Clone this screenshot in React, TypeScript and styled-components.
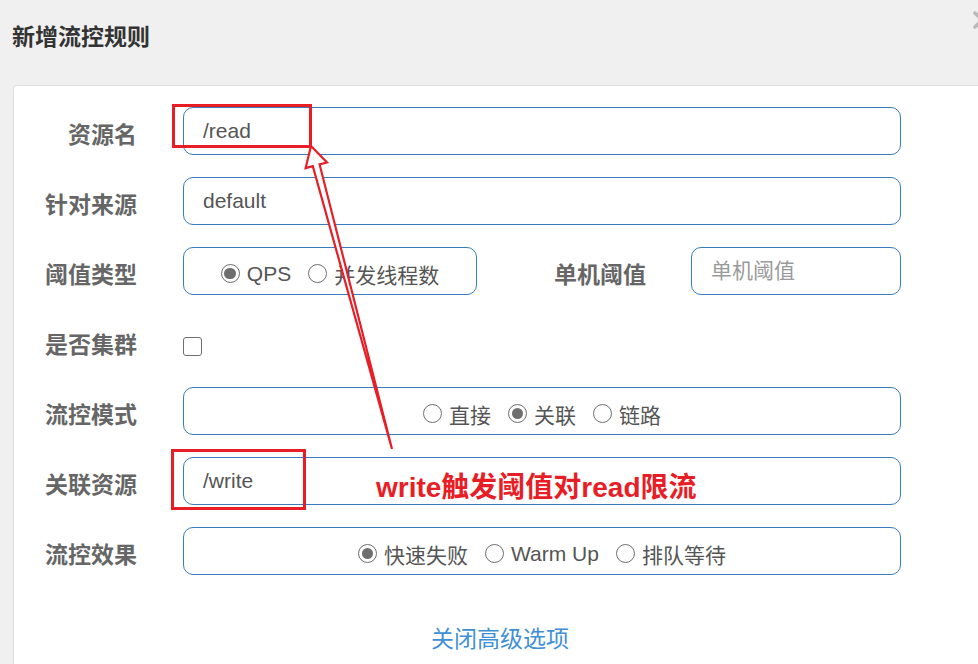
import React from 'react';
import styled, { createGlobalStyle, css } from 'styled-components';

const GlobalStyle = createGlobalStyle`
  html, body { margin: 0; padding: 0; background: #f0f0f0; overflow: hidden; }
  body { font-family: "Liberation Sans", "Noto Sans CJK SC", sans-serif; }
  * { box-sizing: border-box; }
`;

const Page = styled.div`
  position: relative;
  width: 978px;
  height: 664px;
  overflow: hidden;
  background: #f0f0f0;
`;

const Header = styled.div`
  position: relative;
  height: 85px;
  padding: 18px 0 0 12px;
`;

const Title = styled.h4`
  margin: 0;
  font-family: "Noto Sans CJK SC", sans-serif;
  font-size: 23px;
  line-height: 34px;
  font-weight: 700;
  color: #333;
`;

const CloseIcon = styled.svg`
  position: absolute;
  left: 973px;
  top: 11px;
  width: 18px;
  height: 18px;
`;

const Card = styled.div`
  margin-left: 13px;
  width: 974px;
  height: 620px;
  background: #fff;
  border: 1px solid #dcdcdc;
  border-radius: 4px;
  padding-top: 21px;
`;

const Form = styled.div`
  display: flex;
  flex-direction: column;
  gap: 22px;
`;

const Row = styled.div`
  display: flex;
  align-items: center;
  height: 48px;
`;

const Label = styled.label<{ $width?: number; $gap?: number }>`
  flex: none;
  width: ${p => p.$width ?? 123}px;
  margin-right: ${p => p.$gap ?? 46}px;
  padding-top: 4px;
  text-align: right;
  font-family: "Noto Sans CJK SC", sans-serif;
  font-size: 23px;
  font-weight: 700;
  color: #666;
`;

const boxBase = css`
  flex: none;
  height: 48px;
  border: 1px solid #3a7bbf;
  border-radius: 10px;
  background: #fff;
`;

const Input = styled.input<{ $width?: number }>`
  ${boxBase};
  width: ${p => p.$width ?? 718}px;
  padding: 0 19px;
  font-family: "Liberation Sans", "Noto Sans CJK SC", sans-serif;
  font-size: 21px;
  color: #555;
  outline: none;
  &::placeholder { color: #9a9a9a; }
`;

const RadioBox = styled.div<{ $width?: number }>`
  ${boxBase};
  width: ${p => p.$width ?? 718}px;
  display: flex;
  align-items: center;
  justify-content: center;
  gap: 17px;
  padding-top: 5px;
`;

const RadioItem = styled.span`
  display: inline-flex;
  align-items: center;
  gap: 7px;
  font-size: 21px;
  color: #555;
`;

const Dot = styled.span<{ $checked?: boolean }>`
  position: relative;
  flex: none;
  width: 19px;
  height: 19px;
  border-radius: 50%;
  border: 1.6px solid #6e6e6e;
  background: #fff;
  ${p => p.$checked && css`
    &::after {
      content: '';
      position: absolute;
      inset: 2.6px;
      border-radius: 50%;
      background: #6e6e6e;
    }
  `}
`;

const Check = styled.span`
  flex: none;
  width: 19px;
  height: 19px;
  margin-top: 10px;
  border: 1.5px solid #6e6e6e;
  border-radius: 3px;
  background: #fff;
`;

const LinkRow = styled.div`
  margin-top: 45px;
  text-align: center;
`;

const Link = styled.a`
  font-family: "Noto Sans CJK SC", sans-serif;
  font-size: 23px;
  line-height: 34px;
  color: #3f8fd4;
  text-decoration: none;
`;

const Overlay = styled.svg`
  position: absolute;
  left: 0;
  top: 0;
  width: 978px;
  height: 664px;
  pointer-events: none;
`;

const Note = styled.div`
  position: absolute;
  left: 376px;
  top: 474px;
  font-family: "Liberation Sans", "Noto Sans CJK SC", sans-serif;
  font-size: 28px;
  line-height: 1;
  font-weight: 700;
  color: #e81e27;
  white-space: nowrap;
  pointer-events: none;
`;

type Opt = { label: string; checked?: boolean };

const Radios: React.FC<{ options: Opt[]; width?: number }> = ({ options, width }) => (
  <RadioBox $width={width}>
    {options.map(o => (
      <RadioItem key={o.label}>
        <Dot $checked={o.checked} />
        {o.label}
      </RadioItem>
    ))}
  </RadioBox>
);

export default function App() {
  return (
    <Page>
      <GlobalStyle />
      <Header>
        <Title>新增流控规则</Title>
        <CloseIcon viewBox="0 0 18 18">
          <path d="M2 2 L16 16 M16 2 L2 16" stroke="#b8b8b8" strokeWidth="3.5" strokeLinecap="round" />
        </CloseIcon>
      </Header>
      <Card>
        <Form>
          <Row>
            <Label>资源名</Label>
            <Input defaultValue="/read" readOnly />
          </Row>
          <Row>
            <Label>针对来源</Label>
            <Input defaultValue="default" readOnly />
          </Row>
          <Row>
            <Label>阈值类型</Label>
            <Radios width={294} options={[{ label: 'QPS', checked: true }, { label: '并发线程数' }]} />
            <Label $width={169} $gap={45}>单机阈值</Label>
            <Input $width={210} placeholder="单机阈值" />
          </Row>
          <Row>
            <Label>是否集群</Label>
            <Check />
          </Row>
          <Row>
            <Label>流控模式</Label>
            <Radios options={[{ label: '直接' }, { label: '关联', checked: true }, { label: '链路' }]} />
          </Row>
          <Row>
            <Label>关联资源</Label>
            <Input defaultValue="/write" readOnly />
          </Row>
          <Row>
            <Label>流控效果</Label>
            <Radios options={[{ label: '快速失败', checked: true }, { label: 'Warm Up' }, { label: '排队等待' }]} />
          </Row>
        </Form>
        <LinkRow>
          <Link href="#">关闭高级选项</Link>
        </LinkRow>
      </Card>
      <Overlay viewBox="0 0 978 664">
        <rect x="173.5" y="105.5" width="137" height="41" fill="none" stroke="#e81e27" strokeWidth="3" />
        <rect x="172.5" y="450.5" width="132" height="58" fill="none" stroke="#e81e27" strokeWidth="3" />
        <polygon
          points="311,146 327,162.5 319.6,164.4 392,449 312.8,166.2 305.6,168.1"
          fill="#fff"
          stroke="#e81e27"
          strokeWidth="2.2"
          strokeLinejoin="miter"
        />
      </Overlay>
      <Note>write触发阈值对read限流</Note>
    </Page>
  );
}
